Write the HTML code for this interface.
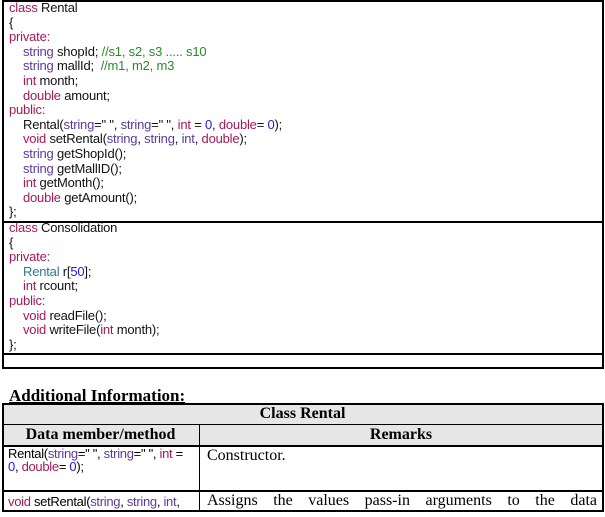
<!DOCTYPE html>
<html><head><meta charset="utf-8"><style>
body{margin:0;width:605px;height:517px;background:#fff;position:relative;overflow:hidden;font-family:"Liberation Sans",Arial,sans-serif;}
.code{font-size:13px;line-height:14.6px;letter-spacing:-0.2px;color:#111;}
.code div{height:14.6px;white-space:pre}
.i{padding-left:14px}
.k{color:#a3195b}.t{color:#5a3a9a}.c{color:#2a8a2a}.n{color:#1a1aee}.r{color:#2b7a8a}
.l{position:absolute;left:9px}
.hl{position:absolute;left:0;width:605px;height:2px;background:#000}
.vl{position:absolute;width:2px;background:#000}
.serif{font-family:"Liberation Serif","Times New Roman",serif}
</style></head><body>
<div class="vl" style="left:2px;top:0;height:369px"></div>
<div class="vl" style="left:602px;top:0;height:369px"></div>
<div class="hl" style="top:0;left:2px;width:602px"></div>
<div class="hl" style="top:221px;left:2px;width:602px"></div>
<div class="hl" style="top:353px;left:2px;width:602px"></div>
<div class="hl" style="top:367px;left:2px;width:602px"></div>
<div class="code l" style="top:1px"><div><span class="k">class</span> Rental</div><div>{</div><div><span class="k">private:</span></div><div class="i"><span class="t">string</span> shopId; <span class="c">//s1, s2, s3 ..... s10</span></div><div class="i"><span class="t">string</span> mallId;  <span class="c">//m1, m2, m3</span></div><div class="i"><span class="k">int</span> month;</div><div class="i"><span class="k">double</span> amount;</div><div><span class="k">public:</span></div><div class="i">Rental(<span class="t">string</span>=" ", <span class="t">string</span>=" ", <span class="k">int</span> = <span class="n">0</span>, <span class="k">double</span>= <span class="n">0</span>);</div><div class="i"><span class="k">void</span> setRental(<span class="t">string</span>, <span class="t">string</span>, <span class="t">int</span>, <span class="k">double</span>);</div><div class="i"><span class="t">string</span> getShopId();</div><div class="i"><span class="t">string</span> getMallID();</div><div class="i"><span class="k">int</span> getMonth();</div><div class="i"><span class="k">double</span> getAmount();</div><div>};</div></div>
<div class="code l" style="top:221px"><div><span class="k">class</span> Consolidation</div><div>{</div><div><span class="k">private:</span></div><div class="i"><span class="r">Rental</span> r[<span class="n">50</span>];</div><div class="i"><span class="k">int</span> rcount;</div><div><span class="k">public:</span></div><div class="i"><span class="k">void</span> readFile();</div><div class="i"><span class="k">void</span> writeFile(<span class="k">int</span> month);</div><div>};</div></div>
<div class="serif" style="position:absolute;left:9px;top:386px;font-size:17px;font-weight:bold;text-decoration:underline;">Additional Information:</div>
<div style="position:absolute;left:2px;top:404px;width:601px;height:41px;background:#e6e6e6"></div>
<div class="hl" style="top:403px;left:2px;width:602px"></div>
<div class="hl" style="top:424px;left:2px;width:602px;height:1px"></div>
<div class="hl" style="top:445px;left:2px;width:602px"></div>
<div class="hl" style="top:490px;left:2px;width:602px"></div>
<div class="hl" style="top:510px;left:2px;width:602px"></div>
<div class="vl" style="left:2px;top:403px;height:109px"></div>
<div class="vl" style="left:602px;top:403px;height:109px"></div>
<div class="vl" style="left:199px;top:425px;height:87px;width:1px"></div>
<div class="serif" style="position:absolute;left:2px;width:601px;top:405px;text-align:center;font-weight:bold;font-size:16px">Class Rental</div>
<div class="serif" style="position:absolute;left:2px;width:197px;top:426px;text-align:center;font-weight:bold;font-size:16px">Data member/method</div>
<div class="serif" style="position:absolute;left:200px;width:402px;top:426px;text-align:center;font-weight:bold;font-size:16px">Remarks</div>
<div style="position:absolute;left:8px;top:447px;width:188px;font-size:13px;line-height:13px;letter-spacing:-0.3px">Rental(<span class="t">string</span>=" ", <span class="t">string</span>=" ", <span class="k">int</span> =<br><span class="n">0</span>, <span class="k">double</span>= <span class="n">0</span>);</div>
<div class="serif" style="position:absolute;left:207px;top:447px;font-size:16px">Constructor.</div>
<div style="position:absolute;left:8px;top:494px;font-size:13px;letter-spacing:-0.3px;white-space:nowrap"><span class="k">void</span> setRental(<span class="t">string</span>, <span class="t">string</span>, <span class="t">int</span>,</div>
<div class="serif" style="position:absolute;left:207px;top:492px;width:390px;font-size:16px;text-align:justify;text-align-last:justify">Assigns the values pass-in arguments to the data</div>
</body></html>
